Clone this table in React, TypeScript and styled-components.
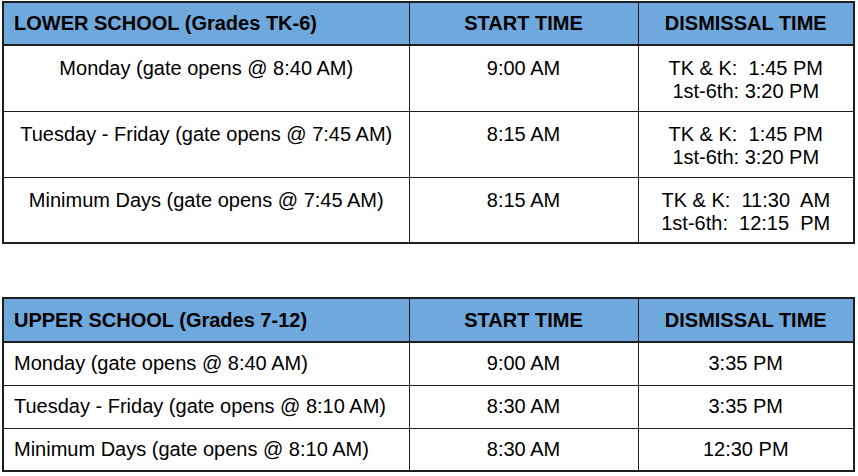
import React from "react";
import styled, { createGlobalStyle } from "styled-components";

interface Row {
  label: string;
  start: string;
  dismissal: string[];
}

const GlobalStyle = createGlobalStyle`
  body {
    margin: 0;
    background: #ffffff;
    font-family: Arial, "Liberation Sans", sans-serif;
    color: #000000;
  }
`;

const Page = styled.div`
  display: flex;
  flex-direction: column;
  gap: 53px;
  padding: 1px 3px 0 2px;
  width: 853px;
`;

const Table = styled.table`
  width: 853px;
  border-collapse: collapse;
  table-layout: fixed;
  border: 2px solid #1e1e1e;
`;

const HeadCell = styled.th<{ align: "left" | "center"; tall: boolean }>`
  background: #6fa8dc;
  border: 1px solid #1e1e1e;
  border-bottom: 2px solid #1e1e1e;
  height: ${props => props.tall ? 43 : 44}px;
  padding: 0 10px;
  font-size: 20px;
  font-weight: 700;
  text-align: ${props => props.align};
  vertical-align: middle;
  box-sizing: border-box;
`;

const Cell = styled.td<{ align: "left" | "center"; tall: boolean }>`
  border: 1px solid #1e1e1e;
  height: ${props => props.tall ? 66 : 43}px;
  padding: ${props => props.tall ? "11px 10px 0" : "0 10px"};
  font-size: 20px;
  line-height: 23px;
  text-align: ${props => props.align};
  vertical-align: ${props => props.tall ? "top" : "middle"};
  white-space: pre;
  box-sizing: border-box;
`;

const lower: Row[] = [
  { label: "Monday (gate opens @ 8:40 AM)", start: "9:00 AM", dismissal: ["TK & K:  1:45 PM", "1st-6th: 3:20 PM"] },
  { label: "Tuesday - Friday (gate opens @ 7:45 AM)", start: "8:15 AM", dismissal: ["TK & K:  1:45 PM", "1st-6th: 3:20 PM"] },
  { label: "Minimum Days (gate opens @ 7:45 AM)", start: "8:15 AM", dismissal: ["TK & K:  11:30  AM", "1st-6th:  12:15  PM"] },
];

const upper: Row[] = [
  { label: "Monday (gate opens @ 8:40 AM)", start: "9:00 AM", dismissal: ["3:35 PM"] },
  { label: "Tuesday - Friday (gate opens @ 8:10 AM)", start: "8:30 AM", dismissal: ["3:35 PM"] },
  { label: "Minimum Days (gate opens @ 8:10 AM)", start: "8:30 AM", dismissal: ["12:30 PM"] },
];

const ScheduleTable: React.FC<{ title: string; rows: Row[]; tall: boolean }> = ({ title, rows, tall }) => (
  <Table>
    <colgroup>
      <col style={{ width: 406 }} />
      <col style={{ width: 229 }} />
      <col />
    </colgroup>
    <thead>
      <tr>
        <HeadCell align="left" tall={tall}>{title}</HeadCell>
        <HeadCell align="center" tall={tall}>START TIME</HeadCell>
        <HeadCell align="center" tall={tall}>DISMISSAL TIME</HeadCell>
      </tr>
    </thead>
    <tbody>
      {rows.map(row => (
        <tr key={row.label}>
          <Cell align={tall ? "center" : "left"} tall={tall}>{row.label}</Cell>
          <Cell align="center" tall={tall}>{row.start}</Cell>
          <Cell align="center" tall={tall}>{row.dismissal.join("\n")}</Cell>
        </tr>
      ))}
    </tbody>
  </Table>
);

const App: React.FC = () => (
  <>
    <GlobalStyle />
    <Page>
      <ScheduleTable title="LOWER SCHOOL (Grades TK-6)" rows={lower} tall />
      <ScheduleTable title="UPPER SCHOOL (Grades 7-12)" rows={upper} tall={false} />
    </Page>
  </>
);

export default App;
